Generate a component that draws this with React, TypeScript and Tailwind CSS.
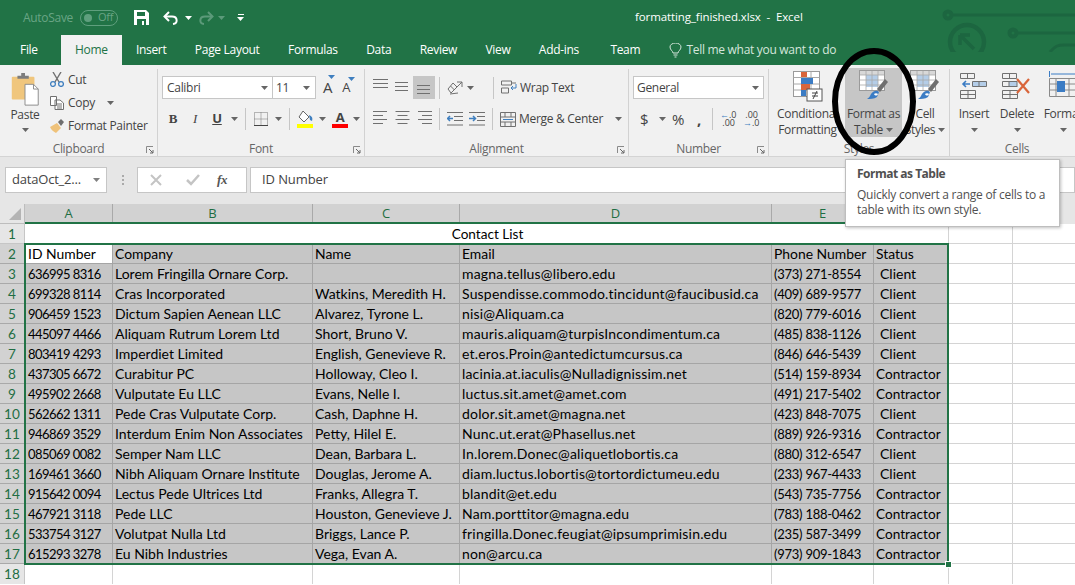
import React from "react";

const rows: string[][] = [
  ["636995 8316", "Lorem Fringilla Ornare Corp.", "", "magna.tellus@libero.edu", "(373) 271-8554", "Client"],
  ["699328 8114", "Cras Incorporated", "Watkins, Meredith H.", "Suspendisse.commodo.tincidunt@faucibusid.ca", "(409) 689-9577", "Client"],
  ["906459 1523", "Dictum Sapien Aenean LLC", "Alvarez, Tyrone L.", "nisi@Aliquam.ca", "(820) 779-6016", "Client"],
  ["445097 4466", "Aliquam Rutrum Lorem Ltd", "Short, Bruno V.", "mauris.aliquam@turpisIncondimentum.ca", "(485) 838-1126", "Client"],
  ["803419 4293", "Imperdiet Limited", "English, Genevieve R.", "et.eros.Proin@antedictumcursus.ca", "(846) 646-5439", "Client"],
  ["437305 6672", "Curabitur PC", "Holloway, Cleo I.", "lacinia.at.iaculis@Nulladignissim.net", "(514) 159-8934", "Contractor"],
  ["495902 2668", "Vulputate Eu LLC", "Evans, Nelle I.", "luctus.sit.amet@amet.com", "(491) 217-5402", "Contractor"],
  ["562662 1311", "Pede Cras Vulputate Corp.", "Cash, Daphne H.", "dolor.sit.amet@magna.net", "(423) 848-7075", "Client"],
  ["946869 3529", "Interdum Enim Non Associates", "Petty, Hilel E.", "Nunc.ut.erat@Phasellus.net", "(889) 926-9316", "Contractor"],
  ["085069 0082", "Semper Nam LLC", "Dean, Barbara L.", "In.lorem.Donec@aliquetlobortis.ca", "(880) 312-6547", "Client"],
  ["169461 3660", "Nibh Aliquam Ornare Institute", "Douglas, Jerome A.", "diam.luctus.lobortis@tortordictumeu.edu", "(233) 967-4433", "Client"],
  ["915642 0094", "Lectus Pede Ultrices Ltd", "Franks, Allegra T.", "blandit@et.edu", "(543) 735-7756", "Contractor"],
  ["467921 3118", "Pede LLC", "Houston, Genevieve J.", "Nam.porttitor@magna.edu", "(783) 188-0462", "Contractor"],
  ["533754 3127", "Volutpat Nulla Ltd", "Briggs, Lance P.", "fringilla.Donec.feugiat@ipsumprimisin.edu", "(235) 587-3499", "Contractor"],
  ["615293 3278", "Eu Nibh Industries", "Vega, Evan A.", "non@arcu.ca", "(973) 909-1843", "Contractor"],
];

const colCls = [
  "text-[13px] tracking-[-0.55px] pl-[3px]",
  "text-[14px]",
  "text-[14px]",
  "text-[14px] tracking-[0.18px]",
  "text-[13px] tracking-[-0.25px]",
  "",
];

const Caret = ({ c = "#666", cls = "" }: { c?: string; cls?: string }) => (
  <svg width="7" height="4" viewBox="0 0 7 4" className={"shrink-0 " + cls}><path d="M0 0h7L3.5 4z" fill={c} /></svg>
);

const Launcher = ({ cls = "" }: { cls?: string }) => (
  <svg width="8" height="8" viewBox="0 0 8 8" className={"shrink-0 " + cls}>
    <path d="M.5 7V.5H7" fill="none" stroke="#8a8a8a" />
    <path d="M3 3l4 4M7 4v3H4" fill="none" stroke="#666" />
  </svg>
);

const Sep = ({ h = "h-[22px]", cls = "" }: { h?: string; cls?: string }) => <div className={"w-px bg-[#c6c6c6] shrink-0 " + h + " " + cls} />;

const Lines = ({ ws, offset = 0 }: { ws: number[]; offset?: number }) => (
  <svg width="15" height={ws.length * 4} viewBox={`0 0 15 ${ws.length * 4}`} className="shrink-0">
    {ws.map((w, i) => (
      <rect key={i} x={offset === 0 ? 0 : offset === 1 ? (15 - w) / 2 : 15 - w} y={i * 4} width={w} height="1" fill="#707070" />
    ))}
  </svg>
);

const BigTableIcon = () => (
  <svg width="30" height="32" viewBox="0 0 30 32">
    <rect x=".5" y=".5" width="25" height="20" fill="#fff" stroke="#9a9a9a" />
    <rect x="1" y="1" width="24" height="4" fill="#d8d8d8" />
    <rect x="7" y="5" width="12" height="12" fill="#b4cde8" />
    <path d="M1 5h24M1 10h24M1 15h24M7 1v19M13 1v19M19 1v19" stroke="#a8a8a8" strokeWidth=".8" />
    <path d="M12 24c3-4 6-4 8-2l-2 5c-3 2-7 2-10 2 2-1 3-3 4-5z" fill="#3b7cc4" />
    <path d="M15 24c1-1 3-1 4 0-1 2-3 2-4 0z" fill="#fff" />
    <path d="M18 19l8-10 3 3-8 10z" fill="#6f6f6f" />
  </svg>
);

const Tab = ({ t, active, cls = "" }: { t: string; active?: boolean; cls?: string }) => (
  <div className={"h-[30px] flex items-center shrink-0 " + (active ? "px-[14px] bg-[#f1f1f1] text-[#217346] " : "px-[14.2px] text-white ") + cls}>{t}</div>
);

const BigBtn = ({ icon, l1, l2, cls = "" }: { icon: React.ReactNode; l1: string; l2?: React.ReactNode; cls?: string }) => (
  <div className={"flex flex-col items-center shrink-0 " + cls}>
    <div className="h-[36px] flex items-center">{icon}</div>
    <div className="h-[16px] leading-[16px] mt-[2px] whitespace-nowrap">{l1}</div>
    <div className="h-[16px] leading-[16px] whitespace-nowrap flex items-center justify-center gap-[3px]">{l2}</div>
  </div>
);

const Group = ({ w, label, launcher, children }: { w: string; label: string; launcher?: boolean; children: React.ReactNode }) => (
  <div className={"h-[88px] mt-[4px] shrink-0 flex flex-col relative border-r border-[#d2d2d2] " + w}>
    <div className="h-[72px] shrink-0 flex flex-col">{children}</div>
    <div className="h-[16px] leading-[16px] shrink-0 text-center text-[#666]">{label}</div>
    {launcher && <Launcher cls="absolute right-[3px] bottom-[3px]" />}
  </div>
);

export default function App() {
  const uiFont = "font-['Open_Sans',sans-serif] text-[12px] tracking-[-0.3px]";
  const head = ["A", "B", "C", "D", "E", "", "", ""];
  const cell = "h-5 pl-[2px] leading-[20px] whitespace-nowrap overflow-hidden border-r border-b";
  return (
    <div className={"w-[1075px] h-[585px] overflow-hidden relative bg-white " + uiFont}>
      {/* title + tabs */}
      <div className="h-[65px] bg-[#217346] relative overflow-hidden">
        <svg className="absolute left-[940px] top-0" width="135" height="52" viewBox="0 0 135 52" fill="none" stroke="#1c6640" strokeWidth="4">
          <circle cx="8" cy="15" r="3.5" />
          <path d="M12 15h123" strokeWidth="3" />
          <circle cx="27" cy="42" r="17" strokeWidth="4.5" />
          <path d="M20 35h10M20 35v10M20 35l14 14" strokeWidth="3.5" />
          <circle cx="73" cy="33" r="3.5" />
          <path d="M77 33h58" strokeWidth="3" />
          <path d="M110 52c5-6 8-7 14-7h11" strokeWidth="3" />
        </svg>
        <div className="h-[35px] flex items-center relative">
          <span className="ml-[23px] w-[57px] text-[#69a585]">AutoSave</span>
          <div className="w-[38px] h-[16px] rounded-full border border-[#5f9f7e] flex items-center pl-[3px] gap-[6px]">
            <div className="w-[8px] h-[8px] rounded-full bg-[#5f9f7e]" />
            <span className="text-[11px] text-[#69a585]">Off</span>
          </div>
          <svg width="15" height="15" viewBox="0 0 15 15" className="ml-[16px]">
            <path d="M0 0h12l3 3v12H0z" fill="#fff" />
            <rect x="3" y="2" width="8" height="4" fill="#217346" />
            <rect x="3" y="9" width="9" height="6" fill="#217346" />
            <rect x="8" y="11" width="2" height="4" fill="#fff" />
          </svg>
          <svg width="16" height="14" viewBox="0 0 16 14" className="ml-[14px]" fill="none" stroke="#fff" strokeWidth="2">
            <path d="M6 1L1.500 5.500 6 10" />
            <path d="M2 5.500h7c6 0 6 7 1 7.500" />
          </svg>
          <Caret c="#fff" cls="ml-[6px]" />
          <svg width="16" height="14" viewBox="0 0 16 14" className="ml-[6px]" fill="none" stroke="#5c9a7a" strokeWidth="2">
            <path d="M10 1l4.500 4.500L10 10" />
            <path d="M14 5.500H7c-6 0-6 7-1 7.500" />
          </svg>
          <Caret c="#5c9a7a" cls="ml-[4px]" />
          <div className="ml-[12px] flex flex-col items-center gap-[2px]">
            <div className="w-[6px] h-px bg-white" />
            <Caret c="#fff" />
          </div>
          <span className="ml-[391px] -mt-[2px] text-white text-[11.5px] tracking-[-0.1px] whitespace-nowrap">formatting_finished.xlsx&nbsp; -&nbsp; Excel</span>
        </div>
        <div className="h-[30px] flex items-center relative">
          <div className="w-[61px] pl-[20px] text-white">File</div>
          <Tab t="Home" active />
          <Tab t="Insert" />
          <Tab t="Page Layout" />
          <Tab t="Formulas" />
          <Tab t="Data" />
          <Tab t="Review" />
          <Tab t="View" />
          <Tab t="Add-ins" />
          <Tab t="Team" cls="ml-[3px]" />
          <svg width="13" height="15" viewBox="0 0 13 15" className="ml-[14px]" fill="none" stroke="#d5e6dc">
            <path d="M4 10c0-2-3-3-3-6a5.500 4 0 0111 0c0 3-3 4-3 6zM4.500 12h4M5.500 14h2" />
          </svg>
          <span className="ml-[5px] text-[#d5e6dc] whitespace-nowrap">Tell me what you want to do</span>
        </div>
      </div>

      {/* ribbon */}
      <div className="h-[92px] bg-[#f1f1f1] border-b border-[#d4d4d4] flex text-[#444] overflow-hidden">
        <Group w="w-[158px]" label="Clipboard" launcher>
          <div className="flex">
            <div className="w-[50px] flex flex-col items-center pt-[4px]">
              <svg width="30" height="34" viewBox="0 0 30 36">
                <rect x="1" y="4" width="24" height="24" rx="1" fill="#f0c67d" />
                <path d="M7 6V3h4V0h4v3h4v3z" fill="#7d7d7d" />
                <path d="M15 12h9l5 5v17H15z" fill="#fff" stroke="#8a8a8a" />
                <path d="M24 12v5h5" fill="none" stroke="#8a8a8a" />
              </svg>
              <span className="leading-[16px]">Paste</span>
              <Caret cls="mt-[5px]" />
            </div>
            <div className="flex flex-col">
              <div className="h-[23px] flex items-center gap-[4px] -mt-[1px]">
                <svg width="14" height="15" viewBox="0 0 14 15" fill="none">
                  <path d="M3 0l6 10M11 0L5 10" stroke="#707070" strokeWidth="1.4" />
                  <circle cx="3" cy="12" r="2.4" stroke="#3f7fbf" strokeWidth="1.3" />
                  <circle cx="11" cy="12" r="2.4" stroke="#3f7fbf" strokeWidth="1.3" />
                </svg>
                <span>Cut</span>
              </div>
              <div className="h-[23px] flex items-center gap-[4px]">
                <svg width="14" height="14" viewBox="0 0 14 14" fill="#fff" stroke="#707070">
                  <path d="M.5.5h6v9h-6zM5 4h5l3.500 3v6.500H5z" />
                  <path d="M7 8h5M7 10h5M7 12h5" />
                </svg>
                <span>Copy</span>
                <Caret cls="ml-[8px]" />
              </div>
              <div className="h-[23px] flex items-center gap-[3px]">
                <svg width="15" height="14" viewBox="0 0 15 14">
                  <path d="M0 8l7-4 4 5-5 5C4 13 1 11 0 8z" fill="#efc27a" />
                  <path d="M8 3l3-3 3 3-3 4z" fill="#6e6e6e" />
                </svg>
                <span className="whitespace-nowrap">Format Painter</span>
              </div>
            </div>
          </div>
        </Group>

        <Group w="w-[207px]" label="Font" launcher>
          <div className="flex mt-[7px] ml-[4px] items-center">
            <div className="w-[111px] h-[23px] bg-white border border-[#c6c6c6] flex items-center justify-between px-[4px]">
              <span>Calibri</span><Caret />
            </div>
            <div className="w-[43px] h-[23px] bg-white border border-[#c6c6c6] border-l-0 flex items-center justify-between px-[3px]">
              <span>11</span><Caret cls="mr-[2px]" />
            </div>
            <span className="ml-[7px] relative text-[15px]">A<Caret c="#3f7fbf" cls="absolute -top-[1px] -right-[3px]" /></span>
            <span className="ml-[10px] relative text-[13px]">A<Caret c="#3f7fbf" cls="absolute -top-[1px] -right-[5px]" /></span>
          </div>
          <div className="flex items-center mt-[9px] ml-[4px] h-[22px]">
            <span className="w-[22px] text-center font-bold font-['Liberation_Serif',serif] text-[13px]">B</span>
            <span className="w-[22px] text-center italic font-['Liberation_Serif',serif] text-[13px]">I</span>
            <span className="w-[22px] text-center underline text-[13px] font-bold">U</span>
            <Caret cls="ml-[3px]" />
            <Sep cls="ml-[7px]" />
            <svg width="14" height="14" viewBox="0 0 14 14" className="ml-[8px]" fill="none" stroke="#777" strokeDasharray="1 1">
              <path d="M.5.5h13v13H.5zM7 .5v13M.5 7h13" />
              <path d="M0 13.500h14" stroke="#444" strokeDasharray="none" />
            </svg>
            <Caret cls="ml-[7px]" />
            <Sep cls="ml-[7px]" />
            <svg width="17" height="18" viewBox="0 0 17 18" className="ml-[7px]">
              <path d="M6 1l6 6-5 5-5-5z" fill="#fff" stroke="#666" />
              <path d="M12 5c3 1 4 3 3 6l-2-1z" fill="#3f7fbf" />
              <rect y="14" width="16" height="4" fill="#ffff00" />
            </svg>
            <Caret cls="ml-[5px]" />
            <div className="ml-[6px] w-[16px] flex flex-col items-center leading-[13px]">
              <span className="font-bold text-[13px] h-[13px]">A</span>
              <div className="w-[16px] h-[4px] bg-[#ff0000]" />
            </div>
            <Caret cls="ml-[5px]" />
          </div>
        </Group>

        <Group w="w-[264px]" label="Alignment" launcher>
          <div className="flex items-center ml-[8px] mt-[7px] h-[23px]">
            <div className="w-[22px] h-[23px] pt-[3px] pl-0"><Lines ws={[15, 15, 15]} /></div>
            <div className="w-[18px] h-[23px] flex items-center"><Lines ws={[13, 13, 13]} /></div>
            <div className="w-[22px] h-[23px] bg-[#c6c6c6] ml-[0px] flex items-end justify-center pb-[2px]"><Lines ws={[13, 13, 13]} /></div>
            <Sep cls="ml-[4px]" />
            <svg width="16" height="15" viewBox="0 0 16 15" className="ml-[7px]" fill="none" stroke="#707070">
              <path d="M1 9l5-6 4 4-6 6zM3.500 6l4 4M10 2h5v5M15 2L9 8" />
              <path d="M3 14l8-1" stroke="#707070" />
            </svg>
            <Caret cls="ml-[4px]" />
            <Sep cls="ml-[19px]" />
            <svg width="16" height="15" viewBox="0 0 16 15" className="ml-[7px]" fill="none" stroke="#707070">
              <path d="M.5 1h10v4H.5zM.5 8h7v5H.5zM11 3h4" />
              <path d="M15 4v4H10M12 6l-2 2 2 2" stroke="#3f7fbf" />
            </svg>
            <span className="ml-[3px]">Wrap Text</span>
          </div>
          <div className="flex items-center ml-[8px] mt-[9px] h-[22px]">
            <div className="w-[22px]"><Lines ws={[14, 10, 14, 10]} /></div>
            <div className="w-[22px]"><Lines ws={[14, 10, 14, 10]} offset={1} /></div>
            <div className="w-[18px]"><Lines ws={[14, 10, 14, 10]} offset={2} /></div>
            <Sep cls="ml-[4px]" />
            <svg width="16" height="14" viewBox="0 0 16 14" className="ml-[7px]" fill="none">
              <path d="M0 .5h16M7 4.500h9M7 8.500h9M0 13h16" stroke="#707070" />
              <path d="M6 6.500H1M3 4L.5 6.500 3 9" stroke="#3f7fbf" strokeWidth="1.5" />
            </svg>
            <svg width="16" height="14" viewBox="0 0 16 14" className="ml-[6px]" fill="none">
              <path d="M0 .5h16M8 4.500h8M8 8.500h8M0 13h16" stroke="#707070" />
              <path d="M0 6.500h6M4 4l2.500 2.500L4 9" stroke="#3f7fbf" strokeWidth="1.5" />
            </svg>
            <Sep cls="ml-[7px]" />
            <svg width="16" height="15" viewBox="0 0 16 15" className="ml-[7px]" fill="none" stroke="#707070">
              <path d="M.5.5h15v14H.5zM.5 5h15M.5 10h15M5 .5V5M11 .500V5M5 10v4.500M11 10v4.500" />
              <path d="M3 7.500h10" stroke="#3f7fbf" />
            </svg>
            <span className="ml-[3px] whitespace-nowrap">Merge &amp; Center</span>
            <Caret cls="ml-[12px]" />
          </div>
        </Group>

        <Group w="w-[140px]" label="Number" launcher>
          <div className="ml-[4px] mt-[7px] w-[131px] h-[23px] bg-white border border-[#c6c6c6] flex items-center justify-between px-[3px] pr-[4px]">
            <span>General</span><Caret />
          </div>
          <div className="flex items-center ml-[11px] mt-[9px] h-[22px]">
            <span className="text-[15px] w-[13px]">$</span>
            <Caret cls="ml-[6px]" />
            <span className="text-[15px] ml-[6px] w-[16px]">%</span>
            <span className="ml-[9px] font-bold text-[15px] w-[8px]">,</span>
            <Sep cls="ml-[7px]" />
            <div className="ml-[7px] w-[15px] text-[9px] leading-[8px] tracking-normal text-right whitespace-nowrap">
              <span className="text-[#3f7fbf]">←</span>.0<br />.00
            </div>
            <div className="ml-[8px] w-[15px] text-[9px] leading-[8px] tracking-normal text-right whitespace-nowrap">
              .00<br /><span className="text-[#3f7fbf]">→</span>.0
            </div>
          </div>
        </Group>

        <Group w="w-[181px]" label="Styles">
          <div className="flex mt-[-1px]">
            <BigBtn
              cls="w-[75px] ml-[1px]"
              icon={
                <svg width="30" height="31" viewBox="0 0 30 31">
                  <rect x=".5" y=".5" width="26" height="25" fill="#fff" stroke="#9a9a9a" />
                  <path d="M.5 6.500h26M.5 13h26M.5 19h26M9 .5v25M18 .5v25" stroke="#a8a8a8" />
                  <rect x="8" y="1" width="6" height="5" fill="#d9653a" />
                  <rect x="8" y="7" width="12" height="6" fill="#3b7cc4" />
                  <rect x="8" y="13" width="9" height="6" fill="#d9653a" />
                  <rect x="8" y="19" width="5" height="6" fill="#3b7cc4" />
                  <rect x="14" y="18" width="15" height="12" fill="#fff" stroke="#555" />
                  <path d="M19 22h6M19 25h6M24 20l-4 8" stroke="#444" />
                </svg>
              }
              l1="Conditional"
              l2="Formatting"
            />
            <div className="w-[57px] h-[69px] bg-[#c6c6c6] shrink-0">
              <BigBtn cls="w-[57px]" icon={<BigTableIcon />} l1="Format as" l2={<>Table <Caret /></>} />
            </div>
            <BigBtn cls="w-[46px]" icon={<BigTableIcon />} l1="Cell" l2={<>Styles <Caret /></>} />
          </div>
        </Group>

        <div className="h-[88px] mt-[4px] flex-1 flex flex-col">
          <div className="h-[72px] shrink-0 flex -mt-[1px]">
            <BigBtn
              cls="w-[48px]"
              icon={
                <svg width="28" height="26" viewBox="0 0 28 26" fill="none" stroke="#707070">
                  <path d="M.5.5h14v5H.5zM7.500.5v5M.5 17.500h15v8H.5zM8 17.500v8M.5 21.500h15" />
                  <path d="M12.500 8.500h14v5h-14zM19 8.500v5" fill="#b4cde8" />
                  <path d="M10 11H3M6 8l-3 3 3 3" stroke="#3b7cc4" strokeWidth="1.6" />
                </svg>
              }
              l1="Insert"
              l2={<Caret />}
            />
            <BigBtn
              cls="w-[38px]"
              icon={
                <svg width="30" height="26" viewBox="0 0 30 26" fill="none" stroke="#707070">
                  <path d="M.5.5h14v5H.5zM7.500.5v5M.5 17.500h15v8H.5zM8 17.500v8M.5 21.500h15M.5 8.500h8v5h-8z" />
                  <rect x="7" y="8.500" width="8" height="5" fill="#b4cde8" />
                  <path d="M15 6l12 14M27 6L15 20" stroke="#d9653a" strokeWidth="2.2" />
                </svg>
              }
              l1="Delete"
              l2={<Caret />}
            />
            <BigBtn
              cls="w-[48px] ml-[3px]"
              icon={
                <svg width="28" height="30" viewBox="0 0 28 30" fill="none" stroke="#8a8a8a">
                  <path d="M.5 0v6M27 0v6M2 3h24" stroke="#3b7cc4" />
                  <path d="M.5 7.500h27v18H.5zM.5 13h27M.5 19h27M7 7.500v18M20 7.500v18" />
                  <rect x="8" y="10" width="8" height="11" fill="#3b7cc4" stroke="none" />
                </svg>
              }
              l1="Format"
              l2={<Caret />}
            />
          </div>
          <div className="h-[16px] leading-[16px] mt-[1px] text-center text-[#666] pr-[3px]">Cells</div>
        </div>
      </div>

      {/* formula bar */}
      <div className="h-[47px] bg-[#e6e6e6] flex pt-[10px]">
        <div className="ml-[5px] w-[102px] h-[26px] bg-white border border-[#c6c6c6] flex items-center justify-between px-[6px] text-[#444] text-[13px] tracking-[-0.2px]">
          <span className="whitespace-nowrap">dataOct_2...</span>
          <Caret c="#808080" />
        </div>
        <div className="ml-[14px] w-[3px] h-[26px] flex flex-col justify-center items-center gap-[2px]">
          <div className="w-[2px] h-[2px] bg-[#aaa]" /><div className="w-[2px] h-[2px] bg-[#aaa]" /><div className="w-[2px] h-[2px] bg-[#aaa]" />
        </div>
        <div className="ml-[13px] w-[110px] h-[26px] bg-white border border-[#c6c6c6] flex items-center text-[#555]">
          <svg width="12" height="12" viewBox="0 0 12 12" className="ml-[12px]" fill="none" stroke="#c4c4c4" strokeWidth="2"><path d="M1 1l10 10M11 1L1 11" /></svg>
          <svg width="14" height="12" viewBox="0 0 14 12" className="ml-[24px]" fill="none" stroke="#c4c4c4" strokeWidth="2.500"><path d="M1 6l4 4 8-9" /></svg>
          <span className="ml-[17px] italic font-bold font-['Liberation_Serif',serif] text-[13px]">fx</span>
        </div>
        <div className="ml-[3px] flex-1 h-[26px] bg-white border border-[#c6c6c6] flex items-center pl-[11px] text-[#444] text-[13px] tracking-[-0.1px]">ID Number</div>
      </div>

      {/* sheet */}
      <div className="relative h-[381px] font-['Lato',sans-serif] text-[13.6px] tracking-normal text-black">
        <div className="grid grid-cols-[25px_88px_200px_147px_312px_102px_75px_64px_63px] grid-rows-[20px]">
          <div className="h-[20px] bg-[#e6e6e6] border-r border-b border-[#bdbdbd] relative overflow-hidden">
            <div className="absolute right-[3px] bottom-[3px] w-0 h-0 border-l-[12px] border-l-transparent border-b-[12px] border-b-[#b4b4b4]" />
          </div>
          {head.map((h, i) => (
            <div key={i} className={"h-[20px] flex items-center justify-center border-r " + (i < 6 ? "bg-[#d2d2d2] border-[#a9a9a9] text-[#1f6e43]" : "bg-[#e6e6e6] border-[#c6c6c6] text-[#444]")}>
              <span className="text-[13px] font-['Open_Sans',sans-serif]">{h}</span>
            </div>
          ))}

          <div className="h-5 bg-[#e6e6e6] border-r border-b border-[#c6c6c6] text-[#1f6e43] text-center leading-[20px]">1</div>
          <div className="col-span-6 h-5 bg-white text-center leading-[20px] border-b border-r border-[#d4d4d4] pl-[2px]">Contact List</div>
          <div className={cell + " border-[#d4d4d4]"} />
          <div className={cell + " border-[#d4d4d4]"} />

          <div className="h-5 bg-[#d2d2d2] border-r border-b border-[#a9a9a9] text-[#1f6e43] text-center leading-[20px]">2</div>
          {["ID Number", "Company", "Name", "Email", "Phone Number", "Status"].map((t, i) => (
            <div key={t} className={cell + " border-[#a5a5a5] text-[13.9px] " + (i === 0 ? "bg-white pl-[3px]" : "bg-[#c6c6c6]")}>{t}</div>
          ))}
          <div className={cell + " border-[#d4d4d4]"} />
          <div className={cell + " border-[#d4d4d4]"} />

          {rows.map((r, i) => (
            <React.Fragment key={i}>
              <div className="h-5 bg-[#d2d2d2] border-r border-b border-[#a9a9a9] text-[#1f6e43] text-center leading-[20px]">{i + 3}</div>
              {r.map((t, j) => (
                <div key={j} className={cell + " border-[#a5a5a5] bg-[#c6c6c6] " + (t === "Client" ? "text-[14px] pl-[6px]" : colCls[j])}>{t}</div>
              ))}
              <div className={cell + " border-[#d4d4d4]"} />
              <div className={cell + " border-[#d4d4d4]"} />
            </React.Fragment>
          ))}

          <div className="h-5 bg-[#e6e6e6] border-r border-[#c6c6c6] text-[#1f6e43] text-center leading-[20px]">18</div>
          {[0, 1, 2, 3, 4, 5, 6, 7].map((i) => (
            <div key={i} className="h-5 border-r border-[#d4d4d4]" />
          ))}
        </div>
        {/* header underline and selection */}
        <div className="absolute left-[25px] top-[18px] w-[924px] h-[2px] bg-[#217346]" />
        <div className="absolute left-[24px] top-[39px] w-[925px] h-[322px] border-2 border-[#217346] pointer-events-none" />
        <div className="absolute left-[945px] top-[357px] w-[7px] h-[7px] bg-[#217346] border border-white" />
      </div>

      {/* overlays */}
      <div className="absolute left-[845px] top-[159px] w-[215px] h-[68px] bg-white border border-[#bebebe] shadow-[1px_1px_3px_rgba(0,0,0,0.25)] px-[11px] pt-[6px] text-[#505050]">
        <div className="font-bold leading-[16px] tracking-[-0.5px]">Format as Table</div>
        <div className="mt-[5px] leading-[15px] tracking-[-0.25px]">Quickly convert a range of cells to a table with its own style.</div>
      </div>
      <svg className="absolute left-[828px] top-[45px]" width="92" height="113" viewBox="0 0 92 113" fill="none">
        <ellipse cx="46" cy="56.500" rx="39" ry="50.500" stroke="#000" strokeWidth="6" />
      </svg>
    </div>
  );
}
